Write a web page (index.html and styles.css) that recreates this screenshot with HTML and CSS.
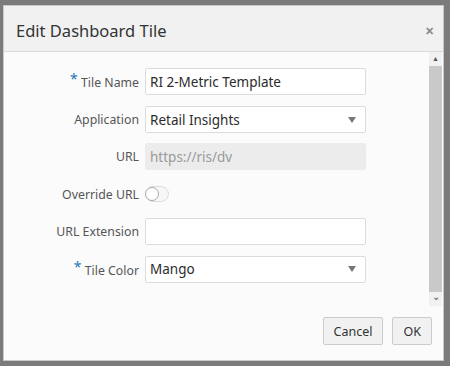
FILE: index.html
```html
<!DOCTYPE html>
<html lang="en">
<head>
  <meta charset="UTF-8" />
  <title>Edit Dashboard Tile</title>
  <link rel="stylesheet" href="styles.css">
</head>
<body>

<div class="dialog">
  <div class="dialog-header">
    <h1>Edit Dashboard Tile</h1>
    <span class="close">&#x2715;</span>
  </div>

  <div class="dialog-body">
    <div class="form">
      <div class="row">
        <label><span class="req">*</span> Tile Name</label>
        <div class="field">RI 2-Metric Template</div>
      </div>
      <div class="row">
        <label>Application</label>
        <div class="field select">Retail Insights<span class="caret"></span></div>
      </div>
      <div class="row">
        <label>URL</label>
        <div class="field disabled">https://ris/dv</div>
      </div>
      <div class="row">
        <label>Override URL</label>
        <div class="switch"><span class="knob"></span></div>
      </div>
      <div class="row">
        <label>URL Extension</label>
        <div class="field"></div>
      </div>
      <div class="row">
        <label><span class="req">*</span> Tile Color</label>
        <div class="field select">Mango<span class="caret"></span></div>
      </div>
    </div>

    <div class="scrollbar">
      <div class="arrow">&#x25B2;</div>
      <div class="thumb"></div>
      <div class="arrow down">&#x2304;</div>
    </div>
  </div>

  <div class="dialog-footer">
    <button>Cancel</button>
    <button>OK</button>
  </div>
</div>

</body>
</html>
```

FILE: styles.css
```css
body {
  margin: 0;
  padding: 5px 0 0 3px;
  background: #7b7b7b;
  font-family: 'Noto Sans', 'Open Sans', sans-serif;
  width: 450px;
  height: 366px;
  box-sizing: border-box;
  overflow: hidden;
}
.dialog {
  width: 441px;
  height: 356px;
  box-sizing: border-box;
  background: #fbfbfb;
  border: 1px solid #c9c9c9;
  display: flex;
  flex-direction: column;
}
.dialog-header {
  height: 46px;
  background: #f1f1f1;
  border-bottom: 1px solid #d9d9d9;
  display: flex;
  align-items: center;
  justify-content: space-between;
  padding: 4px 9px 0 12px;
  box-sizing: border-box;
}
h1 {
  margin: 0;
  font-size: 16.5px;
  font-weight: normal;
  color: #333;
}
.close {
  color: #888;
  font-size: 11px;
  font-weight: bold;
}
.dialog-body {
  height: 254px;
  display: flex;
}
.form {
  flex: 1;
  padding-top: 16px;
}
.row {
  display: flex;
  align-items: center;
  height: 27px;
  margin-bottom: 10.4px;
}
.row:first-child {
  margin-bottom: 11px;
}
label {
  width: 135px;
  text-align: right;
  padding-right: 6px;
  font-size: 12.3px;
  color: #555;
}
.req {
  color: #1f78b4;
  font-size: 14px;
  position: relative;
  top: -3px;
}
.field {
  width: 221px;
  height: 27px;
  box-sizing: border-box;
  border: 1px solid #dcdcdc;
  border-radius: 2px;
  background: #fff;
  font-size: 13.5px;
  color: #2b2b2b;
  padding: 0 4px;
  display: flex;
  align-items: center;
  justify-content: space-between;
}
.field.disabled {
  background: #ececec;
  border-color: #ececec;
  color: #9a9a9a;
}
.caret {
  width: 0;
  height: 0;
  border-left: 4.5px solid transparent;
  border-right: 4.5px solid transparent;
  border-top: 6px solid #777;
  margin-right: 5px;
}
.switch {
  width: 24px;
  height: 16px;
  box-sizing: border-box;
  border: 1px solid #ddd;
  border-radius: 9px;
  background: #f7f7f7;
  display: flex;
  align-items: center;
}
.knob {
  width: 14px;
  height: 14px;
  box-sizing: border-box;
  border-radius: 50%;
  background: #fff;
  border: 1px solid #aaa;
  margin-left: -1px;
}
.scrollbar {
  width: 13px;
  margin-right: 1px;
  background: #f1f1f1;
  display: flex;
  flex-direction: column;
}
.arrow {
  height: 14px;
  font-size: 7px;
  color: #555;
  text-align: center;
  line-height: 14px;
}
.arrow.down {
  font-size: 10px;
  line-height: 8px;
}
.thumb {
  flex: 1;
  background: #c9c9c9;
}
.dialog-footer {
  flex: 1;
  display: flex;
  justify-content: flex-end;
  align-items: flex-start;
  gap: 9px;
  padding: 11px 11px 0 0;
}
button {
  height: 28px;
  padding: 0 10px;
  background: #f1f1f1;
  border: 1px solid #cccccc;
  border-radius: 2px;
  font-family: 'Noto Sans', 'Open Sans', sans-serif;
  font-size: 12.5px;
  color: #333;
}
```
